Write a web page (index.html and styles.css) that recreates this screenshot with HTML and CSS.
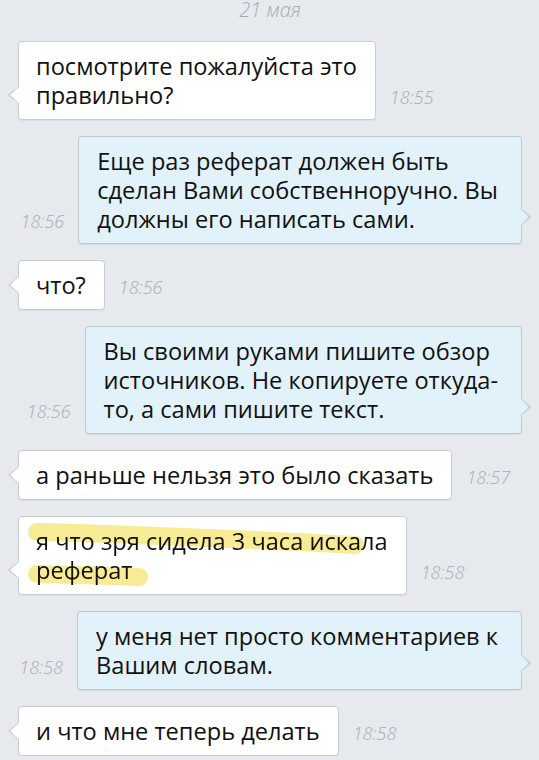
FILE: index.html
```html
<!DOCTYPE html>
<html lang="ru">
<head>
    <meta charset="UTF-8">
    <meta name="viewport" content="width=device-width, initial-scale=1.0">
    <title>Переписка</title>
    <link rel="stylesheet" href="styles.css">
</head>
<body>
    <div class="chat">
        <div class="date">21 мая</div>

        <div class="msg in">
            <div class="bubble">посмотрите пожалуйста это<br>правильно?</div>
            <span class="time">18:55</span>
        </div>

        <div class="msg out">
            <span class="time">18:56</span>
            <div class="bubble">Еще раз реферат должен быть<br>сделан Вами собственноручно. Вы<br>должны его написать сами.</div>
        </div>

        <div class="msg in">
            <div class="bubble">что?</div>
            <span class="time">18:56</span>
        </div>

        <div class="msg out">
            <span class="time">18:56</span>
            <div class="bubble">Вы своими руками пишите обзор<br>источников. Не копируете откуда-<br>то, а сами пишите текст.</div>
        </div>

        <div class="msg in">
            <div class="bubble">а раньше нельзя это было сказать</div>
            <span class="time">18:57</span>
        </div>

        <div class="msg in">
            <div class="bubble marked">
                <!-- marker strokes drawn over the text -->
                <svg class="marker" width="420" height="80" viewBox="0 0 420 80">
                    <path d="M18 15 C 100 17, 220 22, 336 28" />
                    <path d="M18 57 C 60 58, 100 59, 120 60" />
                </svg>
                я что зря сидела 3 часа искала<br>реферат
            </div>
            <span class="time">18:58</span>
        </div>

        <div class="msg out">
            <span class="time">18:58</span>
            <div class="bubble">у меня нет просто комментариев к<br>Вашим словам.</div>
        </div>

        <div class="msg in">
            <div class="bubble">и что мне теперь делать</div>
            <span class="time">18:58</span>
        </div>
    </div>
</body>
</html>
```

FILE: styles.css
```css
body {
    margin: 0;
    background-color: #e6e9ee;
    font-family: 'Open Sans', 'DejaVu Sans', sans-serif;
    color: #111;
    overflow: hidden;
}

.chat {
    display: flex;
    flex-direction: column;
    gap: 16px;
    padding: 0 17px 0 18px;
}

.date {
    margin-top: -2px;
    margin-bottom: 3px;
    text-align: center;
    font-size: 20px;
    line-height: 24px;
    font-style: italic;
    font-weight: 300;
    color: #a3a9b1;
}

.msg {
    display: flex;
    align-items: flex-end;
    gap: 14px;
}

    .msg.out {
        justify-content: flex-end;
    }

.bubble {
    position: relative;
    flex-shrink: 0;
    padding: 10px 18px 9px 17px;
    font-size: 23.6px;
    line-height: 29px;
    white-space: nowrap;
    background-color: #fff;
    border: 1px solid #c8cdd4;
    border-radius: 4px;
    box-shadow: 0 1px 1px rgba(0, 0, 0, 0.06);
}

    .bubble::before,
    .bubble::after {
        content: '';
        position: absolute;
        bottom: 16px;
        border-top: 8px solid transparent;
        border-bottom: 8px solid transparent;
    }

.in .bubble::before {
    left: -11px;
    border-right: 10px solid #c8cdd4;
}

.in .bubble::after {
    left: -9px;
    border-right: 9px solid #fff;
}

.out .bubble {
    background-color: #e2f2fa;
    border-color: #bcc8d0;
    padding-left: 18px;
    padding-right: 23px;
}

    .out .bubble::before {
        right: -10px;
        bottom: 18px;
        border-left: 9px solid #bcc8d0;
    }

    .out .bubble::after {
        right: -8px;
        bottom: 18px;
        border-left: 8px solid #e2f2fa;
    }

.time {
    margin-bottom: 12px;
    font-size: 18px;
    line-height: 22px;
    font-style: italic;
    font-weight: 300;
    color: #a7adb6;
    white-space: nowrap;
}

.marked {
    isolation: isolate;
}

.marker {
    position: absolute;
    left: 0;
    top: 0;
    mix-blend-mode: multiply;
    pointer-events: none;
}

    .marker path {
        fill: none;
        stroke: #f5e67c;
        stroke-width: 18;
        stroke-linecap: round;
        opacity: 0.8;
    }
```
